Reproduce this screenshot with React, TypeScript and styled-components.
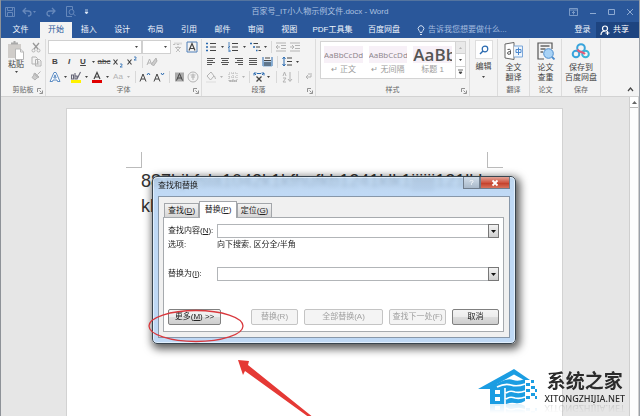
import React from "react";
import styled, { createGlobalStyle, css } from "styled-components";

const Global = createGlobalStyle`
  * { box-sizing: border-box; }
  body { margin: 0; background: #e6e6e6; }
  button, input { font: inherit; color: inherit; margin: 0; padding: 0; }
  body, #root { font-family: "Liberation Sans", "Noto Sans CJK SC", sans-serif; }
`;

const Window = styled.div`
  position: relative;
  display: flex;
  flex-direction: column;
  height: 100vh;
  overflow: hidden;
  border-left: 1px solid #8e9298;
  border-right: 1px solid #9aa0a8;
  background: #e6e6e6;
  font-size: 8px;
  line-height: 12px;
  color: #444;
  white-space: nowrap;
`;

const TitleBar = styled.header`
  display: grid;
  grid-template-columns: 1fr auto 1fr;
  align-items: center;
  height: 22px;
  padding: 0 2px;
  background: #2a579a;
  border-top: 1px solid #54749f;
  color: #adc2e0;
`;
const QuickAccess = styled.div`
  display: flex;
  align-items: center;
  gap: 2px;
  color: #6688bb;
`;
const WindowButtons = styled.div`
  display: flex;
  justify-content: flex-end;
  gap: 5px;
  color: #8eaad2;
`;
const BarButton = styled.button<{ $w?: number }>`
  display: flex;
  align-items: center;
  justify-content: center;
  width: ${(p) => p.$w ?? 14}px;
  height: 16px;
  border: 0;
  background: none;
`;
const DocTitle = styled.div`
  font-size: 8px;
`;

const TabBar = styled.nav`
  display: flex;
  align-items: stretch;
  height: 16px;
  background: #2a579a;
  color: #fff;
`;
const Tab = styled.button<{ $w: number; $active?: boolean }>`
  width: ${(p) => p.$w}px;
  border: 0;
  background: ${(p) => (p.$active ? "#f3f3f3" : "none")};
  color: ${(p) => (p.$active ? "#2a579a" : "#f0f5fc")};
`;
const EvenTabs = styled.div`
  display: flex;
  width: 234px;
  > button { flex: 1; }
`;
const TellMe = styled.button`
  display: flex;
  flex: 1;
  align-items: center;
  gap: 3px;
  padding-left: 8px;
  border: 0;
  background: none;
  color: #a3bbdf;
`;
const Share = styled.button`
  display: flex;
  align-items: center;
  gap: 3px;
  width: 43px;
  padding-left: 4px;
  border: 0;
  background: #1d4480;
  color: #fff;
`;

const RibbonBar = styled.section`
  display: flex;
  height: 59px;
  padding: 1px 0 0;
  background: #f3f3f3;
  border-bottom: 1px solid #d2d2d2;
`;
const Group = styled.div<{ $w: number }>`
  position: relative;
  display: flex;
  flex-direction: column;
  justify-content: space-between;
  width: ${(p) => p.$w}px;
  border-right: 1px solid #dcdcdc;
`;
const GroupLabel = styled.div`
  font-size: 7px;
  text-align: center;
  color: #666;
`;
const Launcher = styled.button`
  position: absolute;
  right: 2px;
  bottom: 2px;
  display: flex;
  border: 0;
  background: none;
  color: #777;
`;
const Rows = styled.div`
  display: flex;
  flex-direction: column;
  padding-left: 2px;
`;
const Row = styled.div`
  display: flex;
  align-items: center;
  height: 15px;
`;
const Tool = styled.button<{ $w?: number; $dim?: boolean; $strong?: boolean }>`
  display: flex;
  align-items: center;
  justify-content: center;
  width: ${(p) => p.$w ?? 14}px;
  height: 14px;
  border: 0;
  background: none;
  color: ${(p) => (p.$dim ? "#b3b3b3" : "#444")};
  ${(p) => p.$strong && css`font-weight: bold;`}
`;
const Sep = styled.span<{ $w: number }>`
  width: ${(p) => p.$w}px;
  height: 12px;
  background: linear-gradient(#d8d8d8, #d8d8d8) center / 1px 100% no-repeat;
`;
const FontCombo = styled.button<{ $w: number }>`
  display: flex;
  align-items: center;
  justify-content: flex-end;
  width: ${(p) => p.$w}px;
  height: 14px;
  padding-right: 2px;
  border: 1px solid #d0d0d0;
  background: #fff;
`;
const ClipBody = styled.div`
  display: flex;
  justify-content: space-between;
  padding: 1px 2px 0 6px;
`;
const BigButton = styled.button`
  display: flex;
  flex-direction: column;
  align-items: center;
  border: 0;
  background: none;
  line-height: 10px;
`;
const AddinButton = styled(BigButton)`
  padding-top: 3px;
  gap: 3px;
`;
const FindButton = styled(BigButton)`
  padding-top: 1px;
  gap: 3px;
`;
const Gallery = styled.div`
  display: flex;
  width: 146px;
  height: 38px;
  margin: 2px 0 0 4px;
  border: 1px solid #d4d4d4;
  background: #fff;
`;
const StyleCard = styled.button<{ $heading?: boolean }>`
  display: flex;
  flex-direction: column;
  justify-content: flex-end;
  flex: 1;
  min-width: 0;
  gap: 1px;
  padding: 0 3px 2px;
  border: 0;
  background: none;
  color: #9a9a9a;
  > span:first-child {
    width: 100%;
    height: 17px;
    overflow: hidden;
    background: #f7f0f7;
    font-family: "Open Sans", sans-serif;
    font-size: ${(p) => (p.$heading ? 17 : 8)}px;
    font-weight: ${(p) => (p.$heading ? 600 : 400)};
    line-height: 17px;
    text-align: left;
    color: ${(p) => (p.$heading ? "#555" : "#8b8389")};
  }
  > span:last-child { align-self: center; }
`;
const GalleryNav = styled.div`
  display: flex;
  flex-direction: column;
  width: 10px;
  border-left: 1px solid #d4d4d4;
  > button {
    flex: 1;
    width: 100%;
    height: auto;
    border-bottom: 1px solid #d4d4d4;
  }
  > button:first-child { background: #e9e9e9; }
  > button:last-child { border-bottom: 0; }
`;
const FindTile = styled.span`
  display: flex;
  align-items: center;
  justify-content: center;
  width: 18px;
  height: 19px;
  border: 1px solid #dedede;
  background: #fff;
`;
const RibbonEnd = styled.div`
  display: flex;
  flex: 1;
  align-items: flex-end;
  justify-content: flex-end;
  padding-right: 2px;
`;

const Workspace = styled.main`
  display: flex;
  flex: 1;
  min-height: 0;
`;
const Desk = styled.div`
  flex: 1;
  padding: 11px 66px 0 65px;
`;
const Paper = styled.article`
  position: relative;
  height: 100%;
  padding: 60px 74px 0;
  background: #fff;
  border: 1px solid #d2d2d2;
  border-bottom: 0;
  font-size: 18px;
  line-height: 25px;
  color: #333;
  overflow: hidden;
  p { margin: 0; }
`;
const MarginMark = styled.i<{ $side: "left" | "right" }>`
  position: absolute;
  top: 43px;
  ${(p) => p.$side}: 59px;
  width: 16px;
  height: 16px;
  border-bottom: 1px solid #bbb;
  ${(p) => (p.$side === "left" ? css`border-right: 1px solid #bbb;` : css`border-left: 1px solid #bbb;`)}
`;
const Scroll = styled.div`
  width: 10px;
  background: #fdfdfd;
  border-left: 1px solid #cfcfcf;
  border-right: 1px solid #cfcfcf;
  > button {
    width: 100%;
    height: 11px;
    background: #fff;
    border-bottom: 1px solid #bbb;
  }
`;

const Dialog = styled.form`
  position: absolute;
  left: 151px;
  top: 176px;
  width: 364px;
  padding: 0 5px 5px;
  border: 1px solid #39454f;
  border-radius: 5px;
  background: linear-gradient(rgba(176, 206, 236, 0.8), rgba(188, 215, 245, 0.95) 20px);
  backdrop-filter: blur(2px);
  box-shadow: 2px 3px 8px 2px rgba(0, 0, 0, 0.65), inset 0 0 0 1px rgba(240, 248, 255, 0.7);
  color: #222;
`;
const DialogTitle = styled.div`
  display: flex;
  align-items: flex-start;
  height: 19px;
  h1 {
    flex: 1;
    margin: 3px 0 0;
    font-size: 8px;
    font-weight: 400;
    line-height: 12px;
  }
`;
const Caption = styled.button<{ $close?: boolean }>`
  display: flex;
  align-items: center;
  justify-content: center;
  width: ${(p) => (p.$close ? 30 : 17)}px;
  height: 12px;
  border: 1px solid #707d8c;
  border-top: 0;
  color: #fff;
  background: ${(p) =>
    p.$close
      ? "linear-gradient(#e3a598, #cf5541 50%, #c03a24 51%, #d9735c)"
      : "linear-gradient(#d2deea, #a9b9ca)"};
`;
const DialogBody = styled.div`
  padding: 4px 5px 5px 4px;
  border: 1px solid #8797a9;
  background: #f0f0f0;
`;
const TabStrip = styled.div`
  display: flex;
  align-items: flex-end;
  height: 16px;
  padding-left: 1px;
`;
const DialogTab = styled.button<{ $active?: boolean }>`
  width: ${(p) => (p.$active ? 38 : 35)}px;
  height: ${(p) => (p.$active ? 17 : 14)}px;
  margin-bottom: ${(p) => (p.$active ? -1 : 0)}px;
  border: 1px solid #a3a6aa;
  border-bottom: 0;
  background: ${(p) => (p.$active ? "#fff" : "linear-gradient(#f3f3f3, #d6d6d6)")};
  z-index: 1;
`;
const Panel = styled.div`
  display: flex;
  flex-direction: column;
  height: 115px;
  padding: 6px 4px;
  border: 1px solid #a6aaae;
  background: #fff;
`;
const Field = styled.div`
  display: flex;
  align-items: center;
  > label, > span:first-child { width: 49px; }
`;
const Combo = styled.div`
  display: flex;
  flex: 1;
  height: 14px;
  border: 1px solid #b2b5b8;
  background: #fff;
  input {
    flex: 1;
    min-width: 0;
    padding: 0 1px;
    border: 0;
    outline: 0;
    background: none;
  }
  button {
    display: flex;
    align-items: center;
    justify-content: center;
    width: 11px;
    margin: -1px;
    border: 1px solid #777;
    background: linear-gradient(#f3f3f3, #cfcfcf);
  }
`;
const Options = styled(Field)`
  height: 14px;
  margin: 0 0 15px;
`;
const Actions = styled.div`
  display: flex;
  gap: 6px;
  margin-top: auto;
`;
const Action = styled.button<{ $w: number }>`
  width: ${(p) => p.$w}px;
  height: 16px;
  border: 1px solid #808080;
  border-radius: 2px;
  background: linear-gradient(#f4f4f4, #ececec 50%, #dcdcdc 51%, #cecece);
  color: #222;
  &:disabled {
    border-color: #c4c4c4;
    background: #f4f4f4;
    color: #a0a0a0;
  }
  &:first-child { margin-right: auto; }
`;

const Annotation = styled.svg`
  position: absolute;
  left: 146px;
  top: 306px;
  pointer-events: none;
`;
const Brand = styled.a`
  position: absolute;
  right: 14px;
  bottom: 11px;
  display: flex;
  align-items: flex-end;
  gap: 7px;
  color: #2b2b2b;
  text-decoration: none;
  -webkit-box-reflect: below -3px linear-gradient(transparent 70%, rgba(0, 0, 0, 0.2));
`;
const BrandText = styled.span`
  display: flex;
  flex-direction: column;
  align-items: center;
  strong {
    font-family: "Noto Sans CJK SC", sans-serif;
    font-size: 19px;
    font-weight: 700;
    line-height: 24px;
  }
  small {
    font-family: "Noto Sans", sans-serif;
    font-size: 9px;
    font-weight: 500;
    line-height: 13px;
  }
`;

const Svg = ({ w = 12, h = 12, children }: { w?: number; h?: number; children: React.ReactNode }) => (
  <svg width={w} height={h} viewBox={`0 0 ${w} ${h}`} fill="none" stroke="currentColor" strokeWidth="1" aria-hidden="true">
    {children}
  </svg>
);
const Caret = () => (
  <Svg w={5} h={4}><path d="M1 1h3L2.500 3z" fill="currentColor" stroke="none" /></Svg>
);
const Drop = ({ w = 7, dim }: { w?: number; dim?: boolean }) => (
  <Tool type="button" $w={w} $dim={dim} aria-label="展开"><Caret /></Tool>
);
const Corner = () => (
  <Launcher type="button" aria-label="更多设置">
    <Svg w={6} h={6}><path d="M.5 4V.5H4M2.500 2.500l2 2M5.500 2.500v3h-3" strokeWidth=".8" /></Svg>
  </Launcher>
);
const Lines = ({ rows }: { rows: [number, number][] }) => (
  <Svg w={10} h={10}>
    {rows.map(([a, b], i) => <path key={i} d={`M${a} ${1.5 + i * 2}H${b}`} strokeWidth=".9" />)}
  </Svg>
);
const GlyphA = ({ mark }: { mark: "up" | "down" }) => (
  <Svg>
    <path d="M1 10.500l3-7.500 3 7.500M2 8h4" />
    <path d={mark === "up" ? "M8 4l1.500-2L11 4" : "M8 2l1.500 2L11 2"} stroke="#2a6ab0" />
  </Svg>
);

const tabs = ["插入", "设计", "布局", "引用", "邮件", "审阅", "视图"];

function Ribbon() {
  return (
    <RibbonBar aria-label="功能区">
      <Group $w={45}>
        <ClipBody>
          <BigButton type="button">
            <Svg w={18} h={20}>
              <path d="M1 4h13v14H1z" fill="#d0cdca" stroke="none" />
              <path d="M4 4.500V2.500h2.500V1h2v1.500H11v2z" fill="#a9a9a9" stroke="none" />
              <path d="M8.500 9h5l3 3v7.500h-8z" fill="#fff" stroke="#b7b7b7" /><path d="M13.500 9v3h3" stroke="#b7b7b7" />
            </Svg>
            粘贴
            <Caret />
          </BigButton>
          <div>
            <Tool type="button" $dim aria-label="剪切">
              <Svg w={10} h={11}><path d="M2 1l5 6M8 1L3 7" strokeWidth="1.300" stroke="#999" /><circle cx="2.500" cy="8.500" r="1.500" /><circle cx="7.500" cy="8.500" r="1.500" /></Svg>
            </Tool>
            <Tool type="button" $dim aria-label="复制">
              <Svg w={11} h={11}><path d="M1 1h4l1.500 1.500V8H1zM4.500 3.500h4L10 5v5H4.500z" fill="#f3f3f3" /><path d="M6 6h2.500M6 8h2.500" /></Svg>
            </Tool>
            <Tool type="button" $dim aria-label="格式刷">
              <Svg w={11} h={11}><path d="M9.500 1.500L6.500 4.500M4 3l4 4-1.500 1-4-4z" fill="#bbb" /><path d="M3 5L1 7.500 4 10l2-2" fill="#ccc" /></Svg>
            </Tool>
          </div>
        </ClipBody>
        <GroupLabel>剪贴板</GroupLabel>
        <Corner />
      </Group>

      <Group $w={156}>
        <Rows>
          <Row>
            <FontCombo type="button" $w={94} aria-label="字体"><Caret /></FontCombo>
            <FontCombo type="button" $w={29} aria-label="字号"><Caret /></FontCombo>
            <Tool type="button" $dim aria-label="拼音指南"><Svg><path d="M1 3.500h2v-2M5 1.500v2h2v-2M9 1.500v2M3 6.500h6M6 5v1.500M4 7l4 4M8 7l-4 4" strokeWidth=".8" /></Svg></Tool>
            <Tool type="button" aria-label="字符边框"><Svg><path d="M1 1h10v10H1z" stroke="#4f7fb8" /><path d="M3 9.500L6 2.500l3 7M4 7.500h4" strokeWidth="1.200" /></Svg></Tool>
          </Row>
          <Row>
            <Tool type="button" $strong>B</Tool>
            <Tool type="button" $strong><em>I</em></Tool>
            <Tool type="button" $strong><u>U</u></Tool>
            <Drop />
            <Tool type="button"><s>abc</s></Tool>
            <Tool type="button" aria-label="下标"><Svg><path d="M1.500 3.500l4 5M5.500 3.500l-4 5" strokeWidth="1.200" /><path d="M8 8h2v1.500L8 11h2.500" stroke="#2a6ab0" strokeWidth=".8" /></Svg></Tool>
            <Tool type="button" aria-label="上标"><Svg><path d="M1.500 3.500l4 5M5.500 3.500l-4 5" strokeWidth="1.200" /><path d="M8 1h2v1.500L8 4h2.500" stroke="#2a6ab0" strokeWidth=".8" /></Svg></Tool>
            <Sep $w={6} />
            <Tool type="button" $dim aria-label="清除格式"><Svg><path d="M1 9l2.500-6L6 9M2 7h3" /><path d="M10 2L5.500 8l2 2L11 5z" fill="#ccc" /></Svg></Tool>
          </Row>
          <Row>
            <Tool type="button" aria-label="文本效果"><Svg><path d="M1 10.500l4-9h2l4 9H8.500L8 9H4l-.5 1.500zM4.800 7h2.400L6 3.800z" stroke="#4b80bd" strokeWidth=".9" fill="#fff" /></Svg></Tool>
            <Drop />
            <Tool type="button" aria-label="突出显示"><Svg><path d="M1 9h10v3H1z" fill="#fff200" stroke="none" /><path d="M1.500 4h2v4h-2zM5 2v6h2V5H5M10.500 1L7 8" stroke="#667" strokeWidth="1.100" /></Svg></Tool>
            <Drop />
            <Tool type="button" aria-label="字体颜色"><Svg><path d="M1 9h10v3H1z" fill="#e00000" stroke="none" /><path d="M3 8l3-6.500L9 8M4 6h4" strokeWidth="1.200" /></Svg></Tool>
            <Drop />
            <Tool type="button" $dim>Aa</Tool>
            <Drop dim />
            <Sep $w={6} />
            <Tool type="button" aria-label="增大字号"><GlyphA mark="up" /></Tool>
            <Tool type="button" aria-label="减小字号"><GlyphA mark="down" /></Tool>
            <Sep $w={6} />
            <Tool type="button" aria-label="字符底纹"><Svg><path d="M2 1.500h9v9H2z" fill="#aaa" stroke="none" /><path d="M3.500 9.500l3-7 3 7M4.500 7h4" /></Svg></Tool>
            <Tool type="button" $dim aria-label="带圈字符"><Svg><circle cx="6" cy="6" r="5" /><path d="M3.500 4h5M6 2.500V9M4 6h4" /></Svg></Tool>
          </Row>
        </Rows>
        <GroupLabel>字体</GroupLabel>
        <Corner />
      </Group>

      <Group $w={114}>
        <Rows>
          <Row>
            <Tool type="button" aria-label="项目符号"><Svg w={10} h={10}><path d="M0 1.500h2M0 5h2M0 8.500h2" stroke="#2a6ab0" strokeWidth="1.600" /><path d="M4 1.500h6M4 5h6M4 8.500h6" /></Svg></Tool>
            <Drop w={8} />
            <Tool type="button" aria-label="编号"><Svg w={10} h={10}><path d="M1 0v3M0 4h2l-2 2h2M0 8h2v2H0" stroke="#2a6ab0" strokeWidth=".8" /><path d="M4 1.500h6M4 5h6M4 8.500h6" /></Svg></Tool>
            <Drop w={8} />
            <Tool type="button" aria-label="多级列表"><Svg w={11} h={10}><path d="M0 1.500h2M3 5h2M6 8.500h1.500" stroke="#2a6ab0" strokeWidth="1.400" /><path d="M3.500 1.500H8M6 5h4M8.500 8.500H11" /></Svg></Tool>
            <Drop w={6} />
            <Sep $w={6} />
            <Tool type="button" $dim aria-label="减少缩进"><Svg w={10} h={10}><path d="M0 1h10M0 9h10M5 3.500h5M5 6.500h5M4 5H0M2 3L0 5l2 2" /></Svg></Tool>
            <Tool type="button" $dim aria-label="增加缩进"><Svg w={10} h={10}><path d="M0 1h10M0 9h10M5 3.500h5M5 6.500h5M0 5h4M2 3l2 2-2 2" /></Svg></Tool>
          </Row>
          <Row>
            <Tool type="button" aria-label="左对齐"><Lines rows={[[1, 9], [1, 7], [1, 9], [1, 6]]} /></Tool>
            <Tool type="button" aria-label="居中"><Lines rows={[[1, 9], [2, 8], [1, 9], [2, 8]]} /></Tool>
            <Tool type="button" aria-label="右对齐"><Lines rows={[[1, 9], [3, 9], [1, 9], [4, 9]]} /></Tool>
            <Tool type="button" aria-label="两端对齐"><Lines rows={[[1, 9], [1, 9], [1, 9], [1, 9]]} /></Tool>
            <Tool type="button" aria-label="分散对齐"><Svg w={11} h={11}><path d="M1 1v9M10 1v9" stroke="#2a6ab0" /><path d="M1 5.500h9v5H1z" fill="#7eaad4" stroke="none" /><path d="M3 2h5M2 4.500h7M2 7h7M2 9h7" /></Svg></Tool>
            <Sep $w={6} />
            <Tool type="button" aria-label="行距"><Svg w={10} h={11}><path d="M2 1v9M.5 3L2 1l1.500 2M.5 8L2 10l1.500-2" stroke="#2a6ab0" /><path d="M5 2h5M5 5.500h5M5 9h5" /></Svg></Tool>
            <Drop />
          </Row>
          <Row>
            <Tool type="button" $dim aria-label="底纹"><Svg><path d="M2 5l4-4 3 4-3.500 4zM9.500 5l1 3" /><path d="M1 11h10" stroke="#ddd" /></Svg></Tool>
            <Drop w={8} dim />
            <Tool type="button" $dim aria-label="边框"><Svg w={10} h={10}><path d="M1 1h8v8H1zM5 1v8M1 5h8" strokeDasharray="1 1" /><path d="M1 9h8" stroke="#999" /></Svg></Tool>
            <Drop w={8} dim />
            <Sep $w={4} />
            <Tool type="button" aria-label="中文版式"><Svg><path d="M3.500 5.500l5 5M8.500 5.500l-5 5" strokeWidth="1.300" /><path d="M1 2l2 2M1 4.500V2h2.500M11 2L9 4M11 4.500V2H8.500M4 2.500h4" stroke="#2a6ab0" /></Svg></Tool>
            <Drop w={7} />
            <Sep $w={9} />
            <Tool type="button" $dim aria-label="排序"><Svg><path d="M1 5l1.500-4L4 5M1 7h3l-3 4h3M8 1v9M6 8l2 2.500L10 8" /></Svg></Tool>
            <Sep $w={6} />
            <Tool type="button" $dim aria-label="显示标记"><Svg w={9} h={9}><path d="M7 1v4H2M4 3L2 5l2 2M5 1v2" /></Svg></Tool>
          </Row>
        </Rows>
        <GroupLabel>段落</GroupLabel>
        <Corner />
      </Group>

      <Group $w={154}>
        <Gallery>
          <StyleCard type="button"><span>AaBbCcDd</span><span>↵ 正文</span></StyleCard>
          <StyleCard type="button"><span>AaBbCcDd</span><span>↵ 无间隔</span></StyleCard>
          <StyleCard type="button" $heading><span>AaBb</span><span>标题 1</span></StyleCard>
          <GalleryNav>
            <Tool type="button" $dim aria-label="上一行"><Svg w={5} h={4}><path d="M1 3h3L2.500 1z" fill="currentColor" stroke="none" /></Svg></Tool>
            <Tool type="button" aria-label="下一行"><Caret /></Tool>
            <Tool type="button" aria-label="更多样式"><Svg w={5} h={6}><path d="M0 1h5M1 3h3L2.500 5z" fill="currentColor" strokeWidth=".8" /></Svg></Tool>
          </GalleryNav>
        </Gallery>
        <GroupLabel>样式</GroupLabel>
        <Corner />
      </Group>

      <Group $w={28}>
        <FindButton type="button">
          <FindTile><Svg w={10} h={10}><circle cx="6" cy="4" r="2.800" stroke="#2a6ab0" strokeWidth="1.200" /><path d="M4 6L1 9" stroke="#2a6ab0" strokeWidth="1.500" /></Svg></FindTile>
          <span>编辑</span>
          <Caret />
        </FindButton>
      </Group>
      <Group $w={32}>
        <AddinButton type="button">
          <Svg w={20} h={18}>
            <path d="M1 2l9-1.500v17L1 16z" fill="#fff" stroke="#666" /><path d="M10 4h8.500v11H10" fill="#eef5fc" stroke="#7ba6d8" />
            <path d="M3.500 7.500q3-1 3 1V12q-3.500 1-3-1 0-1.500 3-1.500" stroke="#555" /><path d="M12 7.500h5v3h-5zM14.500 5.500v7.500" stroke="#4b88cf" />
          </Svg>
          <span>全文<br />翻译</span>
        </AddinButton>
        <GroupLabel>翻译</GroupLabel>
      </Group>
      <Group $w={32}>
        <AddinButton type="button">
          <Svg w={20} h={18}>
            <path d="M8 17H2V1h14v6" stroke="#555" strokeWidth="1.200" /><path d="M4.500 4h9M4.500 7h5M4.500 10H7" stroke="#666" strokeWidth="1.500" />
            <circle cx="12.500" cy="11.500" r="4.800" fill="#a8d2f5" stroke="#4c8ccc" /><path d="M16 15l2.500 2.500" stroke="#4c8ccc" strokeWidth="1.800" />
          </Svg>
          <span>论文<br />查重</span>
        </AddinButton>
        <GroupLabel>论文</GroupLabel>
      </Group>
      <Group $w={39}>
        <AddinButton type="button">
          <Svg w={20} h={18}>
            <circle cx="10" cy="6" r="3.800" stroke="#38a4dc" strokeWidth="2" /><circle cx="5" cy="12" r="3.300" stroke="#38a4dc" strokeWidth="2" />
            <circle cx="14.500" cy="12" r="3.300" stroke="#38b5d8" strokeWidth="2" /><path d="M6.500 7.500q1 2 3.500 2.500t4 2" stroke="#e35b78" strokeWidth="2" />
          </Svg>
          <span>保存到<br />百度网盘</span>
        </AddinButton>
        <GroupLabel>保存</GroupLabel>
      </Group>
      <RibbonEnd>
        <Tool type="button" aria-label="折叠功能区"><Svg w={7} h={7}><path d="M1 5l2.500-3L6 5" strokeWidth="1.200" /></Svg></Tool>
      </RibbonEnd>
    </RibbonBar>
  );
}

function ReplaceDialog() {
  return (
    <Dialog role="dialog" aria-labelledby="dialog-title" onSubmit={(e) => e.preventDefault()}>
      <DialogTitle>
        <h1 id="dialog-title">查找和替换</h1>
        <Caption type="button">?</Caption>
        <Caption type="button" $close aria-label="关闭"><Svg w={8} h={8}><path d="M1.500 1.500l5 5M6.500 1.500l-5 5" strokeWidth="1.800" /></Svg></Caption>
      </DialogTitle>
      <DialogBody>
        <TabStrip role="tablist">
          <DialogTab type="button" role="tab">查找(<u>D</u>)</DialogTab>
          <DialogTab type="button" role="tab" $active aria-selected="true">替换(<u>P</u>)</DialogTab>
          <DialogTab type="button" role="tab">定位(<u>G</u>)</DialogTab>
        </TabStrip>
        <Panel>
          <Field>
            <label htmlFor="find">查找内容(<u>N</u>):</label>
            <Combo><input id="find" autoFocus /><button type="button" aria-label="查找历史"><Svg w={7} h={5}><path d="M1 1h5L3.500 4z" fill="#111" stroke="none" /></Svg></button></Combo>
          </Field>
          <Options><span>选项:</span><span>向下搜索, 区分全/半角</span></Options>
          <Field>
            <label htmlFor="replace">替换为(<u>I</u>):</label>
            <Combo><input id="replace" /><button type="button" aria-label="替换历史"><Svg w={7} h={5}><path d="M1 1h5L3.500 4z" fill="#111" stroke="none" /></Svg></button></Combo>
          </Field>
          <Actions>
            <Action type="button" $w={53}>更多(<u>M</u>) &gt;&gt;</Action>
            <Action type="button" $w={47} disabled>替换(R)</Action>
            <Action type="button" $w={79} disabled>全部替换(A)</Action>
            <Action type="button" $w={57} disabled>查找下一处(F)</Action>
            <Action type="button" $w={47}>取消</Action>
          </Actions>
        </Panel>
      </DialogBody>
    </Dialog>
  );
}

export default function App() {
  return (
    <>
      <Global />
      <Window>
        <TitleBar>
          <QuickAccess>
            <BarButton aria-label="保存"><Svg w={10} h={10}><path d="M.5.5h9v9h-9zM2.500.5v3h5v-3M2.500 9.500v-4h5v4" /></Svg></BarButton>
            <BarButton $w={20} aria-label="撤销"><Svg w={10} h={10}><path d="M4 1L1 4l3 3M1 4h5q3 0 3 2.500T6 9" strokeWidth="1.300" /></Svg><Caret /></BarButton>
            <BarButton $w={20} aria-label="恢复"><Svg w={10} h={10}><path d="M6 1l3 3-3 3M9 4H4Q1 4 1 6.500T4 9" strokeWidth="1.300" /></Svg></BarButton>
            <BarButton aria-label="打印预览"><Svg w={11} h={11}><path d="M7 10.500H1.500V.5h6V4" /><circle cx="6.500" cy="6" r="2.500" /><path d="M8.500 8l2 2" /></Svg></BarButton>
            <BarButton aria-label="自定义"><Svg w={5} h={6}><path d="M1 1h3M1 3h3L2.500 5z" stroke="#dce8f7" fill="#dce8f7" strokeWidth=".8" /></Svg></BarButton>
          </QuickAccess>
          <DocTitle>百家号_IT小人物示例文件.docx - Word</DocTitle>
          <WindowButtons>
            <BarButton aria-label="功能区显示选项"><Svg w={9} h={8}><path d="M.5.5h8v7h-8zM.5 2h8M4.500 6.500V3.500M3 5l1.500-1.500L6 5" strokeWidth=".8" /></Svg></BarButton>
            <BarButton aria-label="最小化"><Svg w={7} h={8}><path d="M1 5.500h6" /></Svg></BarButton>
            <BarButton aria-label="最大化"><Svg w={7} h={8}><path d="M.5 1.500h6v5h-6z" /></Svg></BarButton>
            <BarButton aria-label="关闭窗口"><Svg w={8} h={8}><path d="M1 1l6 6M7 1L1 7" /></Svg></BarButton>
          </WindowButtons>
        </TitleBar>
        <TabBar>
          <Tab $w={39}>文件</Tab>
          <Tab $w={32} $active>开始</Tab>
          <EvenTabs>{tabs.map((t) => <Tab key={t} $w={33}>{t}</Tab>)}</EvenTabs>
          <Tab $w={53}>PDF工具集</Tab>
          <Tab $w={50}>百度网盘</Tab>
          <TellMe>
            <Svg w={8} h={11}><path d="M3 7.500Q3 6.500 2 5.500a2.800 2.800 0 1 1 4 0Q5 6.500 5 7.500zM3 9.500h2" stroke="#d0def2" /></Svg>
            告诉我您想要做什么...
          </TellMe>
          <Tab $w={27}>登录</Tab>
          <Share><Svg w={10} h={11}><circle cx="5" cy="3.500" r="2.500" strokeWidth="1.200" /><path d="M1 10q0-4 4-4M7.500 6v4M5.500 8h4" strokeWidth="1.200" /></Svg>共享</Share>
        </TabBar>
        <Ribbon />
        <Workspace>
          <Desk>
            <Paper>
              <MarginMark $side="left" />
              <MarginMark $side="right" />
              <p>887hjkfsla1042k1kfhufkb1241klk1jjjjjj121lkl</p>
              <p>kl</p>
            </Paper>
          </Desk>
          <Scroll><Tool type="button" aria-label="向上滚动"><Svg w={7} h={5}><path d="M1 4h5L3.500 1z" fill="#666" stroke="none" /></Svg></Tool></Scroll>
        </Workspace>
        <ReplaceDialog />
        <Annotation width="172" height="110" viewBox="0 0 172 110" aria-hidden="true">
          <ellipse cx="49" cy="20" rx="47" ry="15.500" fill="none" stroke="#d9383d" strokeWidth="1.300" />
          <path d="M91 54l11 1-1 4 66 53h-4L98 65l-2 4z" fill="#e53935" />
        </Annotation>
        <Brand href="#home">
          <svg width="60" height="37" viewBox="0 0 60 37" fill="#1b9de2" aria-hidden="true">
            <path d="M0 21L36 1l16 11h-6L36 6.500 19 16l-1 5z" />
            <path d="M12 20l10-6q8-4 13-2 5 2 12-1v22q-5 3-10 2-4-1-9 1H12z" />
            <path d="M17 22h5v4h-5zM17 29h5v4h-5z" fill="#fff" />
            <path d="M19 19q8-4 14-2 6 2 14-1M28 25q4-3 9-1 5 1 10-1M28 31q4-3 9-1 5 1 10-1M27 20v16" fill="none" stroke="#fff" strokeWidth="1.600" />
            <path d="M48 15h4v3h-4zM53 12h3v3h-3zM53 18h4v3h-4zM48 21h4v3h-4zM57 21h2v3h-2zM53 25h4v3h-4zM48 28h4v3h-4zM57 28h2v3h-2z" />
          </svg>
          <BrandText><strong>系统之家</strong><small>XITONGZHIJIA.NET</small></BrandText>
        </Brand>
      </Window>
    </>
  );
}
